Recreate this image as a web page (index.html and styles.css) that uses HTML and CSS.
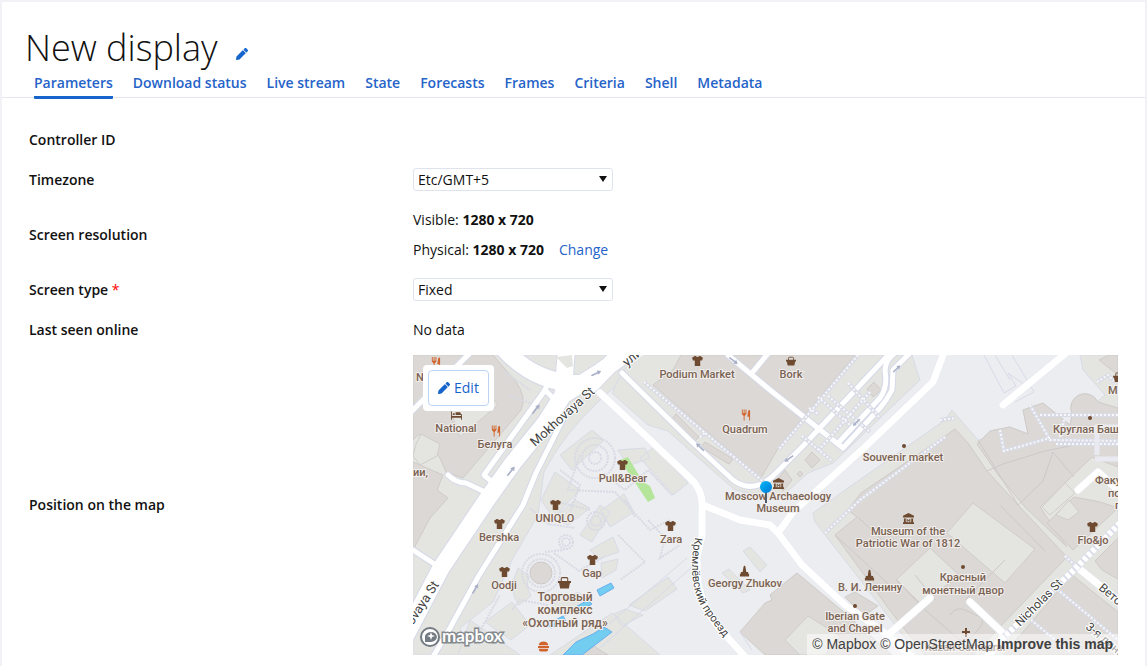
FILE: index.html
```html
<!DOCTYPE html>
<html lang="en">
<head>
<meta charset="utf-8">
<title>New display</title>
<link rel="stylesheet" href="styles.css">
</head>
<body>
<main class="panel">
  <header class="head">
    <h1 class="title">New display</h1>
    <button class="rename" type="button" aria-label="Rename display">
      <svg class="pencil" viewBox="0 0 512 512" aria-hidden="true"><path d="M498 142l-46 46c-5 5-12 5-17 0L324 77c-5-5-5-12 0-17l46-46c19-19 49-19 68 0l60 60c19 19 19 49 0 68zm-214-42L22 362 0 484c-3 16 12 31 28 28l122-22 262-262c5-5 5-12 0-17L301 100c-5-5-12-5-17 0z"/></svg>
    </button>
  </header>
  <nav class="tabs">
    <a class="tab tab-active" href="#parameters">Parameters</a>
    <a class="tab" href="#download">Download status</a>
    <a class="tab" href="#live">Live stream</a>
    <a class="tab" href="#state">State</a>
    <a class="tab" href="#forecasts">Forecasts</a>
    <a class="tab" href="#frames">Frames</a>
    <a class="tab" href="#criteria">Criteria</a>
    <a class="tab" href="#shell">Shell</a>
    <a class="tab" href="#metadata">Metadata</a>
  </nav>
  <form class="form" id="parameters">
    <div class="row"><span class="label">Controller ID</span></div>
    <div class="row">
      <label class="label" for="timezone">Timezone</label>
      <div class="value"><span class="pick"><select class="select" id="timezone"><option>Etc/GMT+5</option></select></span></div>
    </div>
    <div class="row">
      <span class="label">Screen resolution</span>
      <div class="value lines">
        <div>Visible: <b>1280 x 720</b></div>
        <div>Physical: <b>1280 x 720</b><a class="change" href="#change">Change</a></div>
      </div>
    </div>
    <div class="row">
      <label class="label" for="type">Screen type <span class="required">*</span></label>
      <div class="value"><span class="pick"><select class="select" id="type"><option>Fixed</option></select></span></div>
    </div>
    <div class="row"><span class="label">Last seen online</span><div class="value">No data</div></div>
    <div class="row row-map">
      <span class="label">Position on the map</span>
      <div class="map">
        <svg class="canvas" viewBox="413 355 705 300" preserveAspectRatio="xMidYMid slice">
          <defs>
            <symbol id="shirt" viewBox="0 0 12 11"><path d="M0 2l3-2h1q2 2 4 0h1l3 2-1 3-2 0v6H3V5H1z"/></symbol>
            <symbol id="bag" viewBox="0 0 12 11"><path d="M0 4h12v2h-1l-1 5H2L1 6H0z"/><path d="M3 5V2q0-1 1-1h4q1 0 1 1v3" fill="none" stroke="#6e4a30"/></symbol>
            <symbol id="food" viewBox="0 0 12 12"><path d="M2 0h1v4h1V0h1v4h1V0h1v5L5 7v5H4V7L2 5zM9 1q2-1 2 0v11h-1V8H8z" fill="#d0642c"/></symbol>
            <symbol id="museum" viewBox="0 0 12 12"><path d="M6 0l6 3v2H0V3zM1 6h2v4H1zM9 6h2v4H9zM4 6l2 2 2-2v4H7V8L6 9 5 8v2H4zM0 10h12v2H0z"/></symbol>
            <symbol id="statue" viewBox="0 0 12 12"><path d="M6 0l1 1 1 6h2v2h1v3H1V9h1V7h2l1-6z"/></symbol>
            <symbol id="bed" viewBox="0 0 12 9"><path d="M0 0h1v5h10V3h1v6h-1V7H1v2H0zM5 1h5l1 2v1H5zM2 2h2v2H2z"/></symbol>
            <symbol id="arrow" viewBox="0 0 14 6"><path d="M0 2h9V0l5 3-5 3V4H0z" fill="#a9b0c8"/></symbol>
            <symbol id="burger" viewBox="0 0 12 11"><path d="M1 3q1-3 5-3t5 3v1H1zM0 5h12v2H0zM1 8h10v1q0 2-2 2H3q-2 0-2-2z" fill="#d0642c"/></symbol>
            <linearGradient id="pin" x2="1" y2="1"><stop offset="0" stop-color="#00b8f5"/><stop offset="1" stop-color="#0078d8"/></linearGradient>
            <path id="kremlin" d="M695 537Q687 578 700 604Q711 623 737 652"/>
          </defs>
          <path d="M413 355h705v300H413z" fill="#ecedf1"/>
          <g class="land">
            <path d="M413 355H650L600 400Q562 436 544 472L538 515 513 558 493 602 460 628 470 655H413z"/>
            <path d="M622 372L640 355H912L920 380 833 463 808 473 778 500 735 490 678 440 668 431 648 425 612 393z"/>
            <path d="M815 522L813 513 848 488 945 420 952 410 978 440 990 437 990 431 1010 427 1028 434 1023 410 1043 403 1070 425 1105 395 1083 370 1080 355H1118V655H918L872 595z"/>
            <path d="M470 620L520 655H458zM550 655L612 613 660 655zM629 605L668 577 677 589 645 611zM614 614L625 609 643 615 622 626zM743 551L750 547 767 565 760 572zM722 573L729 569 750 590 743 593z"/>
            <path d="M590 550L613 537 619 552 598 559zM601 563L618 559 616 570 602 578zM550 604L578 592 588 600 565 616zM560 455L592 430 604 440 572 470zM541 500L555 472 580 490 553 518zM640 458L654 447 688 483 673 495zM618 450L645 448 650 458 628 466z"/>
            <path d="M519 605Q507 590 518 568L529 576Q525 585 531 596zM580 535L600 505 610 512 592 542zM553 518L575 500 590 508 568 525zM601 510L624 494 634 512 610 527zM485 622L512 602 530 625 511 640z"/>
          </g>
          <g class="building">
            <path d="M413 355H493L516 382Q527 397 521 410L463 478 446 472 440 458 419 434 413 440z"/>
            <path d="M413 462L443 475 437 490 448 498 430 518 413 550z"/>
            <path d="M653 385L673 370 681 355H855L780 445 761 478z"/>
            <path d="M676 414L699 437 695 441 672 419zM705 442L733 459 729 464 701 447zM867 389L874 382 881 390 873 397zM805 460L812 452 820 460 812 468zM797 474l3-3 3 3-3 3zM776 481L785 470 792 480 783 491z"/>
            <path d="M835 535L857 517 848 510 861 493 945 436 955 429 968 443 987 471 1018 505 1067 557 973 655H925L892 613z"/>
            <path d="M740 632L765 603 772 600 770 595 797 573 845 613 892 655H765zM845 597L855 592 878 606 864 616z"/>
            <path d="M977 444L990 431 1010 427 1028 434 1023 410 1043 403 1070 425 1072 414A13 13 0 1 1 1098 402L1118 408V467L1092 457 1040 507 1067 547 1025 507 999 476z"/>
            <path d="M1099 360L1109 355H1118V375zM1118 508L1073 550 1047 523 1074 497 1100 502zM1118 538L1095 561 1102 570 1118 579zM1072 575L1118 612V655H1003z"/>
            <path d="M592 645L608 655H570z"/>
          </g>
          <g class="land court">
            <path d="M416 444L421 434 440 444 437 456 420 465 413 456zM450 410L490 395 498 405 460 437z"/>
            <path d="M973 503L1035 549 1005 583 947 533zM930 548L896 580 920 603 960 576zM808 616L785 640 800 655H825L840 636zM1056 515L1069 500 1079 512 1068 520zM1065 483L1075 493 1050 515 1042 507z"/>
          </g>
          <g class="outline">
            <path d="M1003 464L1045 451 1100 440M1003 464L987 471M1018 505L1043 481 1053 452 1074 477M978 440L1018 505M835 535L895 590M897 580L925 610 960 640M915 575L935 600M858 517L892 550M965 600L1005 560M1000 505L1045 551M950 615Q956 606 965 610T980 617T978 630T958 642"/>
            <path class="fence" d="M590 640L687 558M600 648L700 560M740 632L752 650"/>
            <path class="fence" d="M984 355L1004 393 1016 386 1008 373 1025 385M995 355L1010 380M1012 355L1034 392 1015 402"/>
          </g>
          <g class="water"><path d="M597 590L611 583 614 588 600 596zM572 609L588 600 592 604 577 613zM548 624L563 616 566 621 551 628zM563 655L576 642 593 634 604 627 612 632 582 655z"/></g>
          <path d="M620 460L628 457 643 482 650 486 655 498 648 502 638 487zM637 476L645 482 641 486z" fill="#b5e59a"/>
          <g class="ring">
            <circle cx="541" cy="573" r="19"/><circle cx="541" cy="573" r="14"/>
            <circle cx="566" cy="542" r="7"/><circle cx="566" cy="542" r="4"/>
            <circle cx="595" cy="458" r="20"/><circle cx="595" cy="458" r="13"/><circle cx="595" cy="458" r="6"/>
            <circle cx="596" cy="521" r="9"/><circle cx="596" cy="521" r="5"/>
            <path d="M545 552L564 550M554 553L579 571 604 557M580 455L568 490 615 492 650 530 670 520M530 508L548 524 575 528M550 500L590 510M560 470L580 485 570 512M604 474L625 490 648 470 672 495M648 520L665 538 660 558 680 545M618 535L645 562 620 580M512 610L520 600 548 605M475 640L500 595M625 500L635 517M508 395L535 405M505 372L530 390"/>
          </g>
          <circle cx="541" cy="573" r="11" fill="#dcd8d5" stroke="#cfcaca"/>
          <g class="casing">
            <path class="wide" d="M405 637L441 568 488 498 513 463 546 422 563 395 600 372 640 343M505 350Q540 388 592 383L622 352M563 395L566 355"/>
            <path class="road" d="M548 384L543 393 484 475 492 482M546 391L552 397M565 415L536 473 523 505 478 577 450 628 430 662M448 475Q456 483 466 483L485 492M413 550L436 565M405 418L473 350M622 373L690 440 733 480Q752 494 772 477L802 447 892 351M728 355L770 390 843 448M752 373L770 351M895 353Q885 360 885 371 888 387 880 398L838 443M910 353L893 370 892 390Q887 400 880 408L843 448"/>
            <path class="main" d="M600 393L647 437 690 478Q704 491 702 510L702 535 697 558 698 582Q703 610 719 628L748 660M703 505L740 520 770 525 778 533 802 565 845 605 885 633 915 660M778 533L793 512 865 447 933 382 945 350M888 635L930 598M970 602L1005 635 985 660M1003 405L1066 353M1078 490L1098 472 1118 490M1077 567L1120 602"/>
          </g>
          <g class="roads">
            <path class="wide" d="M405 637L441 568 488 498 513 463 546 422 563 395 600 372 640 343M505 350Q540 388 592 383L622 352M563 395L566 355"/>
            <path class="road" d="M548 384L543 393 484 475 492 482M546 391L552 397M565 415L536 473 523 505 478 577 450 628 430 662M448 475Q456 483 466 483L485 492M413 550L436 565M405 418L473 350M622 373L690 440 733 480Q752 494 772 477L802 447 892 351M728 355L770 390 843 448M752 373L770 351M895 353Q885 360 885 371 888 387 880 398L838 443M910 353L893 370 892 390Q887 400 880 408L843 448"/>
            <path class="main" d="M600 393L647 437 690 478Q704 491 702 510L702 535 697 558 698 582Q703 610 719 628L748 660M703 505L740 520 770 525 778 533 802 565 845 605 885 633 915 660M778 533L793 512 865 447 933 382 945 350M888 635L930 598M970 602L1005 635 985 660M1003 405L1066 353M1078 490L1098 472 1118 490M1077 567L1120 602"/>
          </g>
          <path d="M556 357L572 355 573 366 567 368z" fill="#e4e4e0"/>
          <g class="walk">
            <path class="walk-bed" d="M644 382L765 483M858 355L779 449M809 408L818 414M818 397L850 425M828 396L870 432M848 383L880 418M870 392L817 452M802 436L832 461M1118 415H1040M1030 405L1050 440 1120 441M1056 444H1120M1060 437L1064 420M1000 430L1004 451 1050 438M825 533L860 500 945 437M940 420L955 418M1051 584L1118 640M1031 620L1070 652M1065 556L1077 567M1097 382L1108 375 1115 382M700 437L706 432"/>
            <path class="walk-dots" d="M644 382L765 483M858 355L779 449M809 408L818 414M818 397L850 425M828 396L870 432M848 383L880 418M870 392L817 452M802 436L832 461M1118 415H1040M1030 405L1050 440 1120 441M1056 444H1120M1060 437L1064 420M1000 430L1004 451 1050 438M825 533L860 500 945 437M940 420L955 418M1051 584L1118 640M1031 620L1070 652M1065 556L1077 567M1097 382L1108 375 1115 382M700 437L706 432"/>
            <path class="steps-bed" d="M1120 523L1077 567 1003 638"/>
            <path class="steps" d="M1120 523L1077 567 1003 638"/>
            <path d="M1097 455V427H1118M1095 459H1118" fill="none" stroke="#e9eaf1" stroke-width="5"/>
          </g>
          <g>
            <use href="#arrow" width="12" height="6" transform="translate(530 412) rotate(-52)"/>
            <use href="#arrow" width="12" height="6" transform="translate(505 474) rotate(-52)"/>
            <use href="#arrow" width="11" height="6" transform="translate(590 373) rotate(-25)"/>
            <use href="#arrow" width="11" height="6" transform="translate(470 592) rotate(-60)"/>
            <use href="#arrow" width="11" height="6" transform="translate(702 453) rotate(-137)"/>
            <use href="#arrow" width="11" height="6" transform="translate(731 355) rotate(38)"/>
            <use href="#arrow" width="11" height="6" transform="translate(795 458) rotate(145)"/>
            <use href="#arrow" width="10" height="6" transform="translate(862 421) rotate(135)"/>
            <use href="#arrow" width="10" height="6" transform="translate(891 370) rotate(-43)"/>
          </g>
          <g class="icons">
            <use href="#food" x="430" y="357" width="11" height="11"/>
            <use href="#bed" x="451" y="411" width="11" height="9"/>
            <use href="#food" x="490" y="425" width="11" height="12"/>
            <use href="#food" x="740" y="409" width="11" height="12"/>
            <use href="#shirt" x="692" y="356" width="11" height="10"/>
            <use href="#shirt" x="617" y="460" width="11" height="10"/>
            <use href="#shirt" x="550" y="500" width="11" height="10"/>
            <use href="#shirt" x="494" y="519" width="11" height="10"/>
            <use href="#shirt" x="499" y="567" width="11" height="10"/>
            <use href="#shirt" x="587" y="555" width="11" height="10"/>
            <use href="#shirt" x="665" y="521" width="11" height="10"/>
            <use href="#shirt" x="1087" y="522" width="11" height="10"/>
            <use href="#bag" x="786" y="356" width="10" height="10"/>
            <use href="#bag" x="1113" y="372" width="11" height="10"/>
            <use href="#bag" x="558" y="576" width="13" height="13"/>
            <use href="#museum" x="773" y="478" width="11" height="11"/>
            <use href="#museum" x="903" y="513" width="11" height="11"/>
            <use href="#statue" x="739" y="565" width="11" height="12"/>
            <use href="#statue" x="864" y="569" width="11" height="12"/>
            <use href="#burger" x="538" y="641" width="11" height="11"/>
            <circle cx="904" cy="446" r="2"/><circle cx="1090" cy="418" r="2"/><circle cx="855" cy="606" r="2"/><circle cx="963" cy="567" r="2"/>
            <path d="M965 628h2v3h3v2h-3v4h-2v-4h-3v-2h3z"/>
          </g>
          <g class="poi">
            <text x="416" y="381" text-anchor="start">National</text>
            <text x="456" y="432">National</text><text x="495" y="448">Белуга</text>
            <text x="413" y="476" text-anchor="start">ии,</text>
            <text x="697" y="378">Podium Market</text><text x="791" y="378">Bork</text>
            <text x="745" y="433">Quadrum</text><text x="903" y="461">Souvenir market</text>
            <text x="623" y="482">Pull&amp;Bear</text><text x="555" y="522">UNIQLO</text>
            <text x="499" y="541">Bershka</text><text x="504" y="589">Oodji</text>
            <text x="592" y="577">Gap</text><text x="671" y="543">Zara</text>
            <text x="778" y="500">Moscow Archaeology</text><text x="778" y="512">Museum</text>
            <text x="908" y="535">Museum of the</text><text x="908" y="547">Patriotic War of 1812</text>
            <text x="745" y="587">Georgy Zhukov</text><text x="870" y="591">В. И. Ленину</text>
            <text x="855" y="620">Iberian Gate</text><text x="855" y="632">and Chapel</text>
            <text x="963" y="581">Красный</text><text x="963" y="594">монетный двор</text>
            <text x="1053" y="433" text-anchor="start">Круглая Башня</text>
            <text x="1108" y="394" text-anchor="start">М7</text>
            <text x="1095" y="484" text-anchor="start">Факультет</text><text x="1108" y="497" text-anchor="start">по</text><text x="1115" y="509" text-anchor="start">п</text>
            <text x="1093" y="544">Flo&amp;jo</text><text x="965" y="651">Kazan Cathedral</text>
            <g class="poi-large"><text x="565" y="601">Торговый</text><text x="565" y="614">комплекс</text><text x="565" y="627">«Охотный ряд»</text></g>
          </g>
          <g class="street">
            <text transform="translate(535 447) rotate(-42)">Mokhovaya St</text>
            <text transform="translate(395 653) rotate(-57)">Mokhovaya St</text>
            <text transform="translate(627 367) rotate(-40)">улица</text>
            <g class="street-small">
              <text class="street-curved"><textPath href="#kremlin">Кремлёвский проезд</textPath></text>
              <text transform="translate(1020 627) rotate(-45)">Nicholas St</text>
              <text transform="translate(1098 589) rotate(40)">Ветошный</text>
              <text transform="translate(1085 628) rotate(40)">3-я линия</text>
            </g>
          </g>
          <path d="M766 492v11" stroke="#555c63" stroke-width="2"/>
          <circle cx="766" cy="487" r="6" fill="url(#pin)"/>
          <g class="logo">
            <circle cx="430" cy="637" r="9" fill="#fff" stroke="#747b82" stroke-width="2"/>
            <path d="M425 642v-6a6 5 0 1 1 6 6z" fill="#747b82"/>
            <path d="M431 632l1 3 3 1-3 1-1 3-1-3-3-1 3-1z" fill="#fff"/>
            <text x="442" y="642">mapbox</text>
          </g>
        </svg>
        <div class="tool"><button class="edit" type="button"><svg class="pencil" viewBox="0 0 512 512" aria-hidden="true"><path d="M498 142l-46 46c-5 5-12 5-17 0L324 77c-5-5-5-12 0-17l46-46c19-19 49-19 68 0l60 60c19 19 19 49 0 68zm-214-42L22 362 0 484c-3 16 12 31 28 28l122-22 262-262c5-5 5-12 0-17L301 100c-5-5-12-5-17 0z"/></svg>Edit</button></div>
        <div class="credit"><a href="#mapbox">© Mapbox</a> <a href="#osm">© OpenStreetMap</a> <a href="#improve"><b>Improve this map</b></a></div>
      </div>
    </div>
  </form>
</main>
</body>
</html>
```

FILE: styles.css
```css
* { box-sizing: border-box; }
body {
  margin: 0;
  padding: 2px 2px 0;
  background: #f1f1f6;
  color: #111;
  font: 14px/20px "Open Sans", "Noto Sans", sans-serif;
}
.panel { min-height: calc(100vh - 2px); background: #fff; }
.head { display: flex; align-items: flex-end; gap: 18px; padding: 21px 24px 0 23px; }
.title { margin: 0; font-size: 36px; line-height: 50px; font-weight: 300; }
.rename { display: flex; margin: 0; padding: 0 0 13px; border: 0; background: none; }
.pencil { width: 12px; height: 12px; fill: #1764cc; }
.tabs { display: flex; gap: 20px; padding: 0 32px; border-bottom: 1px solid #e4e7f0; }
.tab {
  margin-bottom: -2px;
  padding-bottom: 3px;
  border-bottom: 3px solid transparent;
  border-radius: 1px;
  color: #2563c9;
  font-weight: 600;
  text-decoration: none;
}
.tab-active { border-color: #1764cc; }
.form { padding: 22px 27px 0; }
.row { display: grid; grid-template-columns: 384px 1fr; align-items: center; min-height: 40px; }
.label { font-weight: 600; }
.required { color: #f00; font-weight: 400; }
.lines { display: grid; gap: 10px; padding: 10px 0; }
.lines b { font-weight: 700; }
.change { margin-left: 15px; color: #2563c9; text-decoration: none; }
.value { font-weight: 400; }
.pick { display: flex; align-items: flex-start; position: relative; width: 200px; height: 24px; }
.pick::after {
  content: "";
  position: absolute;
  top: 8px;
  right: 6px;
  border: solid transparent;
  border-width: 6px 4px 0;
  border-top-color: #111;
}
.select {
  width: 100%;
  height: 23px;
  padding: 0 4px;
  border: 1px solid #dfe3ee;
  border-radius: 3px;
  background: #fff;
  color: #111;
  font: inherit;
  appearance: none;
}
.row-map { padding: 5px 0; }
.map { position: relative; height: 300px; overflow: hidden; }
.canvas { display: block; width: 100%; height: 100%; }
.tool { position: absolute; top: 10px; left: 10px; padding: 5px; border-radius: 4px; background: #fff; }
.edit {
  display: flex;
  align-items: center;
  gap: 4px;
  height: 36px;
  padding: 0 9px;
  border: 1px solid #bcd5f5;
  border-radius: 4px;
  background: #fff;
  color: #1764cc;
  font: inherit;
}
.credit {
  position: absolute;
  right: 0;
  bottom: 0;
  padding: 0 5px;
  background: rgba(255, 255, 255, 0.5);
  color: #404040;
  font: 14px/21px "Liberation Sans", Arial, sans-serif;
}
.credit a { color: inherit; text-decoration: none; }

.land { fill: #e4e4e0; stroke: #d8dbe6; }
.court { stroke: #d0cdca; }
.building { fill: #dcd8d5; stroke: #cfcbc8; }
.outline { fill: none; stroke: #cdc9c8; }
.fence { stroke: #d8dae8; }
.water { fill: #72cdf0; stroke: #6aaeef; }
.ring { fill: none; stroke: #d8dae4; stroke-width: 2; stroke-dasharray: 2 1; }
.casing, .roads { fill: none; stroke: #d5d9e8; stroke-linejoin: round; stroke-linecap: round; }
.casing .wide { stroke-width: 19; }
.casing .road { stroke-width: 7; }
.casing .main { stroke-width: 8; stroke: #e6e8ef; }
.roads { stroke: #fff; }
.roads .wide { stroke-width: 17; }
.roads .road { stroke-width: 5; }
.roads .main { stroke-width: 7; }
.walk { fill: none; }
.walk-bed { stroke: #d9dbe6; stroke-width: 4; }
.walk-dots { stroke: #f8f8fa; stroke-width: 2; stroke-dasharray: 2 2; }
.steps-bed { stroke: #dadde9; stroke-width: 7; }
.steps { stroke: #fff; stroke-width: 6; stroke-dasharray: 4 2; }
.icons { fill: #6e4a30; }
.poi {
  fill: #7a6252;
  stroke: #f1efed;
  stroke-width: 2;
  paint-order: stroke;
  text-anchor: middle;
  font: 500 11px Roboto, sans-serif;
}
.poi-large { font-size: 12px; }
.street {
  fill: #444;
  stroke: #fff;
  stroke-width: 2;
  paint-order: stroke;
  font: 13px Roboto, sans-serif;
}
.street-small { font-size: 12px; }
.street-curved { font-size: 11px; }
.logo text {
  fill: #fff;
  stroke: #858a8e;
  stroke-width: 3;
  paint-order: stroke;
  font: 700 17px Lato, sans-serif;
}
```
